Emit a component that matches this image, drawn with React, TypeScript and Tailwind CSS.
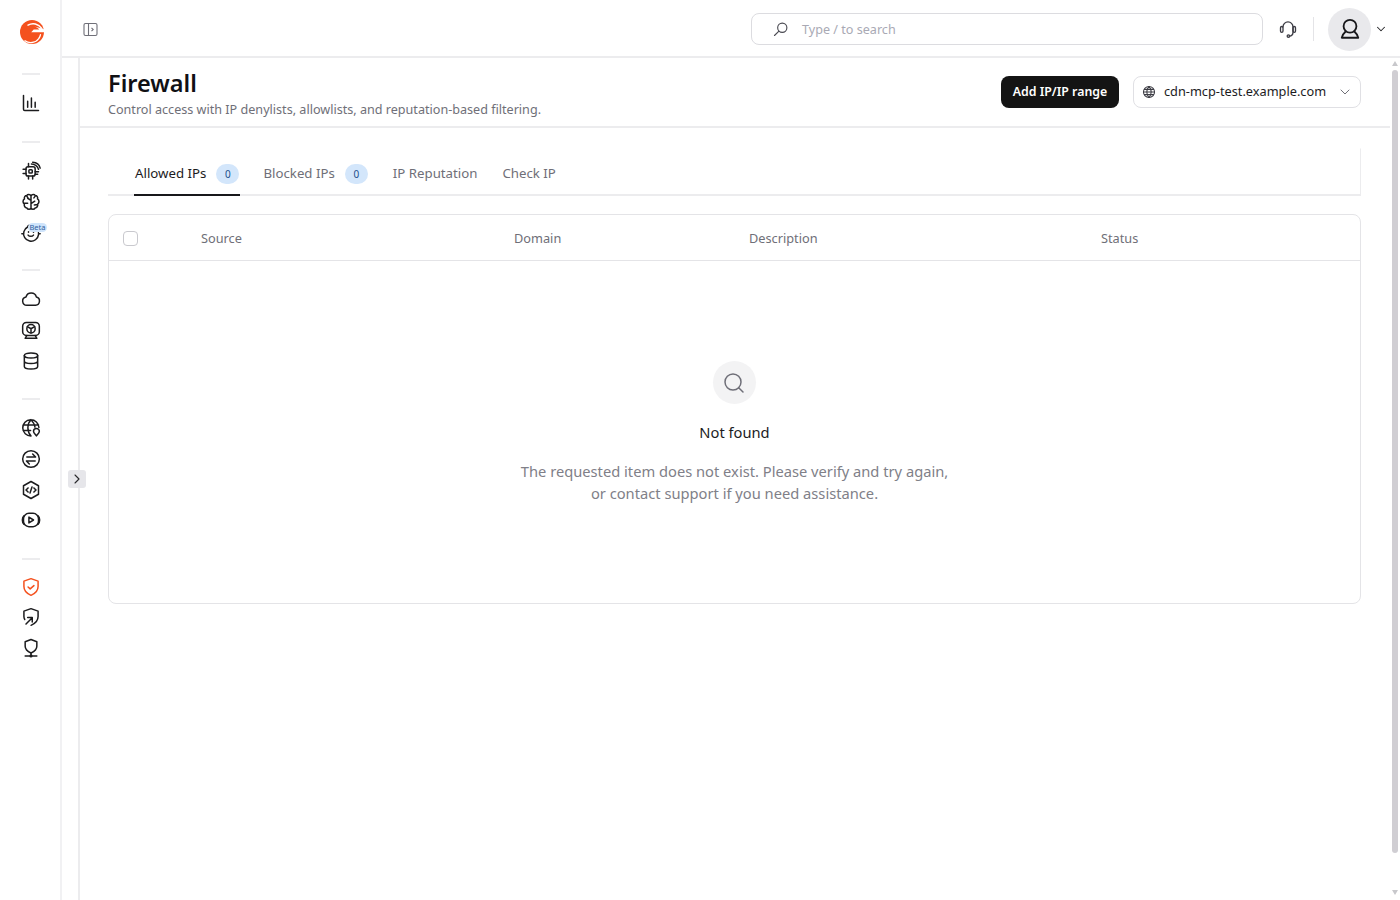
import { ChevronDown, ChevronRight, Search } from 'lucide-react';
import type { ReactNode } from 'react';

function NavIcon({ children, className = 'text-[#1c1c1e]' }: { children: ReactNode; className?: string }) {
  return (
    <div className={`relative flex h-[30.67px] items-center justify-center ${className}`}>
      <svg width="20" height="20" viewBox="0 0 24 24" fill="none" stroke="currentColor" strokeWidth="1.8" strokeLinecap="round" strokeLinejoin="round">
        {children}
      </svg>
    </div>
  );
}

function Divider() {
  return <div className="mx-auto h-[2px] w-[18px] bg-[#ececee]" />;
}

function Sidebar() {
  return (
    <aside className="flex h-full w-[62px] shrink-0 flex-col border-r-2 border-[#f1f1f3] bg-white pl-[1px]">
      <div className="flex h-[64px] items-center justify-center pl-[3px]">
        <svg width="24" height="26" viewBox="0 0 24 26">
          <circle cx="12" cy="13" r="12" fill="#f4511e" />
          <path d="M8 6.200C12.500 3.400 18.500 4.600 21.800 9.400" fill="none" stroke="#fff" strokeWidth="1.400" strokeLinecap="round" />
          <path d="M14.500 7.500L22 9.500l2.500 1v2.800H11.200l2.500-2.800h5.500c-1-1.300-2.800-2.400-4.700-3z" fill="#fff" />
          <path d="M5 21.800c4 2.800 10.500 2.500 13.800-2.300 1-1.300 1.500-2.600 1.700-3.800" fill="none" stroke="#fff" strokeWidth="1.300" strokeLinecap="round" />
        </svg>
      </div>
      <div className="mt-[9px]"><Divider /></div>
      <div className="mt-[13px]">
        <NavIcon>
          <path d="M3 3v16.500c0 .8.700 1.500 1.500 1.500H21" />
          <path d="M8 10v7M12.500 6v11M17 11v6" />
        </NavIcon>
      </div>
      <div className="mt-[22px]"><Divider /></div>
      <div className="mt-[13.500px]">
        <NavIcon>
          <rect x="6" y="7" width="11" height="11" rx="2.500" />
          <rect x="9.500" y="10.500" width="4" height="4" rx="1" />
          <path d="M2.500 10H6M2.500 15H6M9 18v3.500M14 18v3.500M9 3v4M12.500 3.500C16 3.500 20 6 21 10M14 1.500c4 .3 8 3 9 7M17 13h4M17 16h3" />
        </NavIcon>
        <NavIcon>
          <path d="M12 4.500C11 2.800 8 2.500 6.800 4.300 4.800 4.300 3.500 6.500 4.200 8.300 2 9.800 1.800 13 4 14.500c-.5 2.500 1 4.500 3 4.700 1.200 2 4 2 5 .300 1 1.700 3.800 1.700 5-.300 2-.2 3.500-2.200 3-4.700 2.200-1.500 2-4.700-.2-6.200.7-1.800-.6-4-2.600-4C16 2.500 13 2.800 12 4.500zM12 4.500v15M12 10l-4-2.500M12 14l4.500-3M4 13.500h4M16 15.500l4-.5M7 5l1.500 2.500M17 5l-1.500 2" />
        </NavIcon>
        <NavIcon>
          <path d="M8 4.800A9 9 0 1 0 19 7M8 4.800C8 3 9.500 2.500 10.500 3M8.500 14.500c1.500 2 5 2 6.500 0" />
          <path d="M9 10.500v.5M15 10.500v.5" />
          <path d="M2 13H1M22 13h1" />
        </NavIcon>
        <span className="absolute left-[28px] top-[223px] flex h-[9px] w-[19px] items-center justify-center rounded-full bg-[#cfe4fb] text-[7.500px] leading-none text-[#2f5f9e]">Beta</span>
      </div>
      <div className="mt-[21px]"><Divider /></div>
      <div className="mt-[13px]">
        <NavIcon>
          <path d="M7 19.500A5 5 0 0 1 6 9.600 6.500 6.500 0 0 1 18.500 9.700 5 5 0 0 1 17.500 19.500z" />
        </NavIcon>
        <NavIcon>
          <rect x="2" y="3" width="20" height="15.500" rx="4.500" />
          <circle cx="12" cy="10.500" r="5" />
          <path d="M12 10.500V15.500M12 10.500l-4.300-2.500M12 10.500l4.300-2.500M5 22h14M7 18.500l-2 3.500M17 18.500l2 3.500" />
        </NavIcon>
        <NavIcon>
          <ellipse cx="12" cy="5.500" rx="8" ry="3" />
          <path d="M4 5.500v13c0 1.700 3.600 3 8 3s8-1.300 8-3v-13M4 12c0 1.700 3.600 3 8 3s8-1.300 8-3" />
        </NavIcon>
      </div>
      <div className="mt-[22px]"><Divider /></div>
      <div className="mt-[13px]">
        <NavIcon>
          <path d="M21.500 11.500A9.700 9.700 0 1 0 12 21.500M3 8.500h18M2.500 15h9M12 2c-5 5-5 14 0 19.500M12 2c3 3 4.500 6 4.800 9" />
          <path d="M18.500 12.500a3.500 3.500 0 0 1 3.500 3.500c0 2-2 3.500-3.500 5.500-1.500-2-3.500-3.500-3.500-5.500a3.500 3.500 0 0 1 3.500-3.500z" />
        </NavIcon>
        <NavIcon>
          <circle cx="12" cy="12" r="10" />
          <path d="M7 9.500h10M14 6l3.500 3.500M17 14.500H7M10 18l-3.500-3.500" />
        </NavIcon>
        <NavIcon>
          <path d="M12 1.800l9 5.100v10.200l-9 5.100-9-5.100V6.900z" />
          <path d="M8.500 9.500L6 12l2.500 2.500M15.500 9.500L18 12l-2.500 2.500M13.200 8.500l-2.400 7" />
        </NavIcon>
        <NavIcon>
          <rect x="3" y="4" width="18" height="16" rx="6.500" />
          <path d="M3.500 7C1 9 1 15 3.500 17M20.500 7c2.500 2 2.500 8 0 10" />
          <path d="M9.500 8.500v7l5.500-3.500z" />
        </NavIcon>
      </div>
      <div className="mt-[22.500px]"><Divider /></div>
      <div className="mt-[11px]">
        <NavIcon className="text-[#f4511e]">
          <path d="M12 2l8.500 3v6.500c0 5-3.500 8.500-8.500 10.500-5-2-8.500-5.500-8.500-10.500V5z" />
          <path d="M8.500 12l2.500 2.300 4.500-4" />
        </NavIcon>
        <NavIcon>
          <path d="M4.500 15c-.7-1.200-1-2.300-1-3.500V5L12 2l8.500 3v6.500c0 5-3.500 8.500-8.500 10.500" />
          <path d="M6 20.500l7.500-7.500M8 12.500h5.500V18" />
        </NavIcon>
        <NavIcon>
          <path d="M12 1.800l7 2.700v5.500c0 3.800-3 6.300-7 8-4-1.700-7-4.200-7-8V4.500z" />
          <path d="M12 18v3M5 21.500h14" />
          <circle cx="12" cy="21.500" r="1" fill="currentColor" />
        </NavIcon>
      </div>
    </aside>
  );
}

function TopBar() {
  return (
    <header className="flex h-[58px] shrink-0 items-center border-b-2 border-[#ececee] bg-white pt-[2px]">
      <svg className="ml-[21px] text-[#6f6f78]" width="15" height="15" viewBox="0 0 15 15" fill="none" stroke="currentColor" strokeWidth="1.100">
        <rect x="1" y="1.500" width="13" height="12" rx="1.500" />
        <path d="M5.500 1.500v12M8.500 5.800l1.700 1.700-1.700 1.700" />
      </svg>
      <div className="ml-[653px] flex h-[32px] w-[512px] items-center rounded-lg border border-[#dcdce0] pl-[20px]">
        <svg width="17" height="17" viewBox="0 0 24 24" fill="none" stroke="#4a4a52" strokeWidth="1.600" strokeLinecap="round">
          <circle cx="14.500" cy="9.500" r="6.500" />
          <path d="M9.800 14.200L3.500 20.500" />
        </svg>
        <span className="ml-[13px] pt-[2px] text-[12.600px] text-[#a9a9b4]">Type / to search</span>
      </div>
      <svg className="ml-[15px]" width="20" height="20" viewBox="0 0 24 24" fill="none" stroke="#3c3c44" strokeWidth="1.600" strokeLinecap="round">
        <path d="M6 9.500a6 6 0 0 1 12 0V16c0 3-2 4.500-4.500 4.500" />
        <rect x="3" y="9" width="3" height="7" rx="1.500" />
        <rect x="18" y="9" width="3" height="7" rx="1.500" />
        <circle cx="12.500" cy="20.500" r="1.500" />
      </svg>
      <div className="ml-[15px] h-[24px] w-px bg-[#e4e4e7]" />
      <div className="ml-[14px] flex h-[43px] w-[43px] items-center justify-center rounded-full bg-[#e9e9ec]">
        <svg width="22" height="22" viewBox="0 0 24 24" fill="none" stroke="#18181b" strokeWidth="2" strokeLinecap="round" strokeLinejoin="round">
          <circle cx="12" cy="9" r="7" />
          <path d="M7.500 14.500C5.500 16.300 3.800 18.500 3 21.500h18c-.8-3-2.500-5.200-4.500-7" />
        </svg>
      </div>
      <ChevronDown className="ml-[3px] text-[#27272a]" size={14} strokeWidth={1.800} />
    </header>
  );
}

function Tab({ label, count, active }: { label: string; count?: number; active?: boolean }) {
  return (
    <div className={`-mb-[2px] flex items-center border-b-2 px-[1px] pt-[5px] first:mr-[-1px] ${active ? 'border-[#18181b] text-[#1c1c1e]' : 'border-transparent text-[#6f6f78]'}`}>
      <span className="text-[13.250px]">{label}</span>
      {count !== undefined && (
        <span className="ml-[10px] flex h-[20px] w-[23px] items-center justify-center rounded-full bg-[#d3e6fb] text-[10px] text-[#1d4f8c]">{count}</span>
      )}
    </div>
  );
}

function EmptyState() {
  return (
    <div className="flex h-[342px] flex-col items-center pt-[100px]">
      <div className="flex h-[43px] w-[43px] items-center justify-center rounded-full bg-[#f3f3f4]">
        <Search size={24} strokeWidth={1.500} className="mr-[2px] text-[#6f6f78]" />
      </div>
      <p className="mt-[18px] text-[14.700px] leading-[20px] text-[#1c1c1e]">Not found</p>
      <p className="mt-[18px] text-center text-[14.700px] leading-[22px] text-[#808088]">
        The requested item does not exist. Please verify and try again,
        <br />
        or contact support if you need assistance.
      </p>
    </div>
  );
}

function Scrollbar() {
  return (
    <div className="flex w-[10px] shrink-0 flex-col items-center bg-white">
      <div className="mt-[3px] h-0 w-0 border-x-[3.500px] border-b-[5px] border-x-transparent border-b-[#c8c8cc]" />
      <div className="mt-[4px] h-[783px] w-[6px] rounded-full bg-[#d0ced3]" />
      <div className="mt-[37px] h-0 w-0 border-x-[3.500px] border-t-[5px] border-x-transparent border-t-[#c8c8cc]" />
    </div>
  );
}

export default function App() {
  return (
    <div className="relative flex h-screen overflow-hidden bg-white font-['Noto_Sans',sans-serif]">
      <Sidebar />
      <div className="flex min-w-0 flex-1 flex-col">
        <TopBar />
        <div className="flex min-h-0 flex-1">
          <div className="w-[18px] shrink-0 border-r-2 border-[#ececee]" />
          <main className="min-w-0 flex-1">
            <div className="flex h-[70px] items-center justify-between border-b-2 border-[#ececee] pl-[28px] pr-[29px]">
              <div className="pt-[1px]">
                <h1 className="text-[23.500px] font-semibold leading-[33px] text-[#101014]">Firewall</h1>
                <p className="mt-[1px] text-[12.600px] leading-[18px] text-[#6f6f78]">Control access with IP denylists, allowlists, and reputation-based filtering.</p>
              </div>
              <div className="flex items-center">
                <button className="h-[32px] w-[118px] rounded-lg bg-[#141414] text-[12.350px] font-semibold text-white">Add IP/IP range</button>
                <div className="ml-[14px] flex h-[32px] w-[228px] items-center rounded-lg border border-[#e0e0e4] pl-[8px]">
                  <svg width="14" height="14" viewBox="0 0 24 24" fill="none" stroke="#3c3c44" strokeWidth="1.800">
                    <circle cx="12" cy="12" r="9.500" />
                    <path d="M2.500 12h19M3.500 7.500h17M3.500 16.500h17M12 2.500c-5 5-5 14 0 19M12 2.500c5 5 5 14 0 19" />
                  </svg>
                  <span className="ml-[8px] text-[12.750px] text-[#1c1c1e]">cdn-mcp-test.example.com</span>
                  <ChevronDown className="ml-[11px] text-[#5a5a62]" size={16} strokeWidth={1.300} />
                </div>
              </div>
            </div>
            <div className="pl-[28px] pr-[29px] pt-[20px]">
              <div className="flex h-[48px] items-stretch gap-[23px] border-b-2 border-r border-t border-[#ececee] border-t-transparent pl-[26px]">
                <Tab label="Allowed IPs" count={0} active />
                <Tab label="Blocked IPs" count={0} />
                <Tab label="IP Reputation" />
                <Tab label="Check IP" />
              </div>
              <div className="mt-[18px] rounded-lg border border-[#e4e4e7]">
                <div className="flex h-[46px] items-center border-b border-[#e4e4e7] pt-[2px] text-[12.750px] text-[#6f6f78]">
                  <div className="ml-[14px] h-[15px] w-[15px] rounded-[4px] border border-[#c9c9ce] bg-white" />
                  <span className="ml-[63px] w-[313px]">Source</span>
                  <span className="w-[235px]">Domain</span>
                  <span className="w-[352px]">Description</span>
                  <span>Status</span>
                </div>
                <EmptyState />
              </div>
            </div>
          </main>
          <Scrollbar />
        </div>
      </div>
      <button className="absolute left-[68px] top-[470px] flex h-[18px] w-[17.500px] items-center justify-center rounded-[3px] bg-[#e6e6ea] text-[#27272a]">
        <ChevronRight size={16} strokeWidth={1.600} />
      </button>
    </div>
  );
}
